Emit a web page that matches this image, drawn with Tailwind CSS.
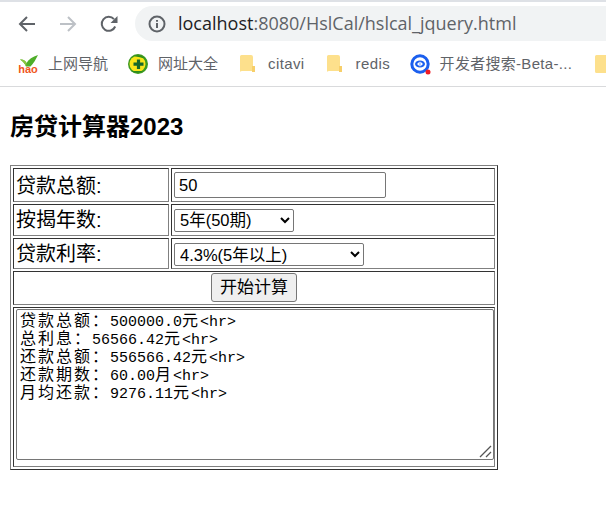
<!DOCTYPE html>
<html lang="en">
<head>
<meta charset="UTF-8">
<title>房贷计算器2023</title>
<script src="https://cdn.jsdelivr.net/npm/@tailwindcss/browser@4"></script>
</head>
<body class="bg-white overflow-hidden font-['Liberation_Sans','Noto_Sans_CJK_SC',sans-serif] text-black">
    <!-- Browser toolbar -->
    <div class="h-[41px] pt-[4px] pl-[18px] flex border-t-2 border-[#dee1e6]">
        <div class="flex items-center h-[35px] w-[117px] shrink-0">
            <svg width="18" height="18" viewBox="0 0 18 18" fill="none" stroke="#5f6368" stroke-width="2"><path d="M17 9H2M9 2 2 9l7 7"/></svg>
            <svg class="ml-[23px]" width="18" height="18" viewBox="0 0 18 18" fill="none" stroke="#bdc1c6" stroke-width="2"><path d="M1 9h15M9 2l7 7-7 7"/></svg>
            <svg class="ml-[23px]" width="18" height="18" viewBox="0 0 18 18" fill="none"><path d="M15.200 11.500A7 7 0 1 1 14 4.200" stroke="#5f6368" stroke-width="2"/><path d="M17.500 1v7h-7z" fill="#5f6368"/></svg>
        </div>
        <div class="h-[35px] flex-1 bg-[#f1f3f4] rounded-l-full flex items-center pl-[13px]">
            <svg width="18" height="18" viewBox="0 0 18 18" fill="none"><circle cx="9" cy="9" r="7.500" stroke="#5f6368" stroke-width="2"/><path d="M9 8v5M9 5v1.800" stroke="#5f6368" stroke-width="2"/></svg>
            <span class="ml-[12px] text-[18px] whitespace-nowrap font-['Open_Sans',sans-serif] text-[#5f6368]"><span class="text-[#202124]">localhost</span>:8080/HslCal/hslcal_jquery.html</span>
        </div>
    </div>

    <!-- Bookmarks bar -->
    <div class="h-[46px] pt-px border-b border-[#d9dadc] flex items-center pl-[18px] text-[15px] text-[#5f6368] whitespace-nowrap overflow-hidden">
        <div class="relative w-[20px] h-[19px] shrink-0">
            <svg class="absolute left-[2px] top-0" width="18" height="12" viewBox="0 0 18 12"><path d="M0 4.500c3-.5 5.500 1 6.500 3.500C8.500 4.500 12.500 1.500 18 0c-2 4-4.500 8.500-7.500 11.500H6C5 9 3 6 0 4.500z" fill="#4fae2a"/><path d="M0 4.500c3-.5 5.500 1 6.500 3.500l-.5 3.500C5 9 3 6 0 4.500z" fill="#8cc63f"/></svg>
            <span class="absolute left-0 top-[10px] w-[20px] text-center text-[11px] leading-[9px] font-bold text-[#f0561d]">hao</span>
        </div>
        <span class="ml-[10px] w-[60px]">上网导航</span>
        <svg class="ml-[20px] shrink-0" width="20" height="20" viewBox="0 0 20 20"><circle cx="10" cy="10" r="10" fill="#3c9a1f"/><circle cx="9.500" cy="10" r="8" fill="#f8e61a"/><path d="M6 2c4-1.500 9 0 11 3-3-1.500-7-2-11-3zM3 17c3 2 8 2.500 12 0-4 0-8 0-12 0z" fill="#2c8a1c"/><path d="M10.500 5.500v9.500M5.500 10.200h10" stroke="#14692a" stroke-width="3.200"/></svg>
        <span class="ml-[10px] w-[60px]">网址大全</span>
        <svg class="ml-[22px] shrink-0" width="15" height="18" viewBox="0 0 15 18"><path d="M1.500 0H11a2 2 0 0 1 2 2v14H1.500A1.500 1.500 0 0 1 0 16.500V1.500A1.500 1.500 0 0 1 1.500 0z" fill="#fde08c"/><path d="M12 11h3v6h-3z" fill="#f7cf6a"/></svg>
        <span class="ml-[13px] w-[37px] tracking-[0.4px]">citavi</span>
        <svg class="ml-[22px] shrink-0" width="15" height="18" viewBox="0 0 15 18"><path d="M1.500 0H11a2 2 0 0 1 2 2v14H1.500A1.500 1.500 0 0 1 0 16.500V1.500A1.500 1.500 0 0 1 1.500 0z" fill="#fde08c"/><path d="M12 11h3v6h-3z" fill="#f7cf6a"/></svg>
        <span class="ml-[14px] w-[34px] tracking-[0.4px]">redis</span>
        <svg class="ml-[20px] shrink-0" width="21" height="21" viewBox="0 0 21 21"><circle cx="10" cy="10" r="8.200" fill="#fff" stroke="#1b5fee" stroke-width="3"/><ellipse cx="10" cy="10" rx="5" ry="3.500" fill="#1b5fee"/><path d="M9.700 7.500 7 10l2.700 2.500zM10.300 7.500 13 10l-2.700 2.500z" fill="#fff"/><circle cx="18" cy="18" r="2.500" fill="#ee1c25"/></svg>
        <span class="ml-[9px] w-[133px] tracking-[0.3px]">开发者搜索-Beta-...</span>
        <svg class="ml-[23px] shrink-0" width="15" height="18" viewBox="0 0 15 18"><path d="M1.500 0H15v18H1.500A1.500 1.500 0 0 1 0 16.500V1.500A1.500 1.500 0 0 1 1.500 0z" fill="#fde08c"/></svg>
    </div>

    <!-- Page content -->
    <div class="px-[10px]">
        <h1 class="text-[24px] leading-[28px] font-bold mt-[26px] mb-[24px]">房贷计算器2023</h1>

        <table class="w-[488px] table-fixed border-separate border-spacing-[2px] border border-t-[#808080] border-l-[#808080] border-r-[#333] border-b-[#333] text-[20px] leading-[26px]">
            <tbody>
                <tr class="h-[34px]">
                    <td class="w-[156px] pl-[2px] pt-px border border-t-[#333] border-l-[#333] border-r-[#808080] border-b-[#808080]">贷款总额:</td>
                    <td class="pl-[2px] border border-t-[#333] border-l-[#333] border-r-[#808080] border-b-[#808080]">
                        <input type="text" value="50" class="block w-[212px] h-[26px] px-[4px] text-[16.5px] border border-[#767676] rounded-[2px]">
                    </td>
                </tr>
                <tr class="h-[32px]">
                    <td class="pl-[2px] border border-t-[#333] border-l-[#333] border-r-[#808080] border-b-[#808080]">按揭年数:</td>
                    <td class="pl-[2px] border border-t-[#333] border-l-[#333] border-r-[#808080] border-b-[#808080]">
                        <select class="block w-[120px] h-[23px] pl-px text-[16.5px] border border-[#767676] rounded-[2px] bg-white">
                            <option>5年(50期)</option>
                        </select>
                    </td>
                </tr>
                <tr class="h-[31px]">
                    <td class="pl-[2px] pt-px border border-t-[#333] border-l-[#333] border-r-[#808080] border-b-[#808080]">贷款利率:</td>
                    <td class="pl-[2px] pt-[2px] border border-t-[#333] border-l-[#333] border-r-[#808080] border-b-[#808080]">
                        <select class="block w-[190px] h-[23px] pl-px text-[16.5px] border border-[#767676] rounded-[2px] bg-white">
                            <option>4.3%(5年以上)</option>
                        </select>
                    </td>
                </tr>
                <tr class="h-[34px]">
                    <td colspan="2" class="pt-px align-top border border-t-[#333] border-l-[#333] border-r-[#808080] border-b-[#808080]">
                        <button class="block mx-auto w-[86px] h-[29px] text-[17px] leading-none bg-[#efefef] border border-[#767676] rounded-[3px]">开始计算</button>
                    </td>
                </tr>
                <tr class="h-[160px]">
                    <td colspan="2" class="p-px align-top border border-t-[#333] border-l-[#333] border-r-[#808080] border-b-[#808080]">
                        <div class="relative w-[478px] h-[151px] ml-px pl-[3px] pt-[3px] border border-[#767676] rounded-[2px] font-['Liberation_Mono','Noto_Sans_CJK_SC',monospace] text-[15px] leading-[18px] whitespace-nowrap overflow-hidden">
                            <div class="h-[18px]"><span class="text-[16px] leading-[18px] tracking-[2px]">贷款总额：</span>500000.0<span class="text-[16px] leading-[18px] tracking-[2px]">元</span>&lt;hr&gt;</div>
                            <div class="h-[18px]"><span class="text-[16px] leading-[18px] tracking-[2px]">总利息：</span>56566.42<span class="text-[16px] leading-[18px] tracking-[2px]">元</span>&lt;hr&gt;</div>
                            <div class="h-[18px]"><span class="text-[16px] leading-[18px] tracking-[2px]">还款总额：</span>556566.42<span class="text-[16px] leading-[18px] tracking-[2px]">元</span>&lt;hr&gt;</div>
                            <div class="h-[18px]"><span class="text-[16px] leading-[18px] tracking-[2px]">还款期数：</span>60.00<span class="text-[16px] leading-[18px] tracking-[2px]">月</span>&lt;hr&gt;</div>
                            <div class="h-[18px]"><span class="text-[16px] leading-[18px] tracking-[2px]">月均还款：</span>9276.11<span class="text-[16px] leading-[18px] tracking-[2px]">元</span>&lt;hr&gt;</div>
                            <svg class="absolute right-[1px] bottom-[1px]" width="13" height="13" viewBox="0 0 13 13" fill="none" stroke="#555" stroke-width="1.300"><path d="M1 12 12 1M7 12l5-5"/></svg>
                        </div>
                    </td>
                </tr>
            </tbody>
        </table>
    </div>
</body>
</html>
